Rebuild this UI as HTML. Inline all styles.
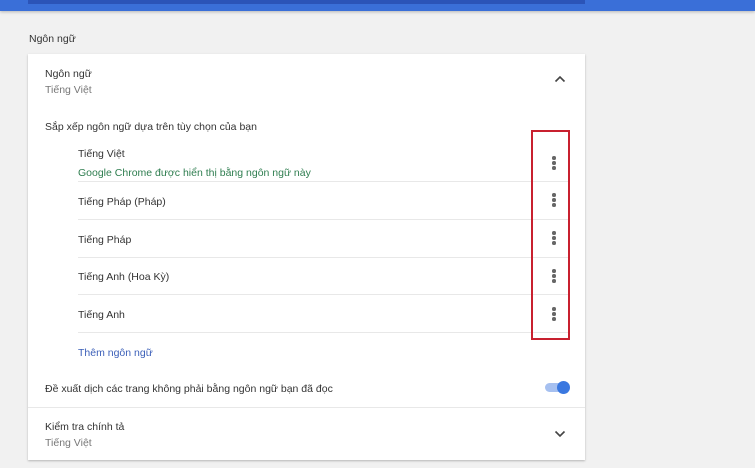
<!DOCTYPE html>
<html><head><meta charset="utf-8"><style>
body{margin:0;width:755px;height:468px;background:#f1f1f1;font-family:"Liberation Sans",sans-serif;font-size:10.5px;color:#333;position:relative;overflow:hidden}
.a{position:absolute;white-space:nowrap}
.t{position:absolute;white-space:nowrap;transform:translateY(2px)}
.sep{position:absolute;height:1px;background:#e8e8e8}
.dots{position:absolute;left:552px;width:4px}
.dots i{display:block;width:3.5px;height:3.5px;border-radius:50%;background:#666;margin-bottom:1.7px}
.g{color:#777}
</style></head><body>
<div class="a" style="left:0;top:0;width:755px;height:11px;background:#3a6fd8;box-shadow:0 1px 3px rgba(0,0,0,.25)"></div>
<div class="a" style="left:28px;top:0;width:557px;height:4px;background:#2b54b8"></div>
<div class="t" style="left:29px;top:31px">Ngôn ngữ</div>
<div class="a" style="left:28px;top:54px;width:557px;height:406px;background:#fff;box-shadow:0 1px 2px rgba(0,0,0,.25)"></div>
<div class="t" style="left:45px;top:66px">Ngôn ngữ</div>
<div class="t g" style="left:45px;top:82px">Tiếng Việt</div>
<svg class="a" style="left:554px;top:75px" width="12" height="8"><path d="M1.5 6.5L6 2L10.5 6.5" stroke="#444" stroke-width="1.6" fill="none"/></svg>
<div class="t" style="left:45px;top:119px">Sắp xếp ngôn ngữ dựa trên tùy chọn của bạn</div>
<div class="t" style="left:78px;top:146px">Tiếng Việt</div>
<div class="t" style="left:78px;top:165px;color:#2e7d4f">Google Chrome được hiển thị bằng ngôn ngữ này</div>
<div class="sep" style="left:78px;top:181px;width:492px"></div>
<div class="t" style="left:78px;top:194px">Tiếng Pháp (Pháp)</div>
<div class="sep" style="left:78px;top:219px;width:492px"></div>
<div class="t" style="left:78px;top:232px">Tiếng Pháp</div>
<div class="sep" style="left:78px;top:257px;width:492px"></div>
<div class="t" style="left:78px;top:269px">Tiếng Anh (Hoa Kỳ)</div>
<div class="sep" style="left:78px;top:294px;width:492px"></div>
<div class="t" style="left:78px;top:307px">Tiếng Anh</div>
<div class="sep" style="left:78px;top:332px;width:492px"></div>
<div class="dots" style="top:156px"><i></i><i></i><i></i></div>
<div class="dots" style="top:193px"><i></i><i></i><i></i></div>
<div class="dots" style="top:231px"><i></i><i></i><i></i></div>
<div class="dots" style="top:269px"><i></i><i></i><i></i></div>
<div class="dots" style="top:307px"><i></i><i></i><i></i></div>
<div class="a" style="left:531px;top:130px;width:35px;height:206px;border:2px solid #c8202f"></div>
<div class="t" style="left:78px;top:345px;color:#3b5fb8">Thêm ngôn ngữ</div>
<div class="t" style="left:45px;top:381px">Đề xuất dịch các trang không phải bằng ngôn ngữ bạn đã đọc</div>
<div class="a" style="left:545px;top:383px;width:24px;height:9px;border-radius:5px;background:#a6c0f0"></div>
<div class="a" style="left:557px;top:381px;width:13px;height:13px;border-radius:50%;background:#3a78e0"></div>
<div class="sep" style="left:28px;top:407px;width:557px"></div>
<div class="t" style="left:45px;top:419px">Kiểm tra chính tả</div>
<div class="t g" style="left:45px;top:435px">Tiếng Việt</div>
<svg class="a" style="left:554px;top:430px" width="12" height="8"><path d="M1.5 1.5L6 6L10.5 1.5" stroke="#444" stroke-width="1.6" fill="none"/></svg>
</body></html>
